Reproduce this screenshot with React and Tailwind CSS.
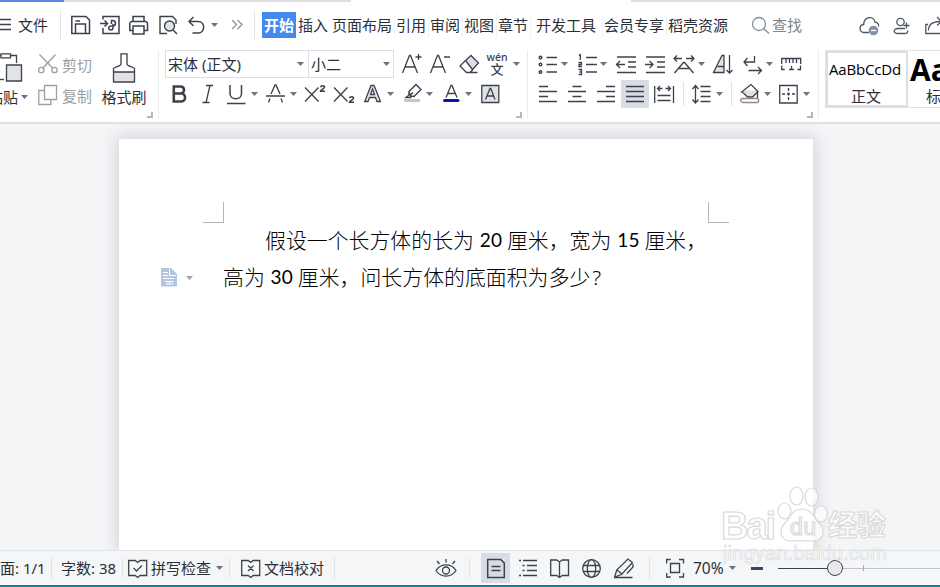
import React from 'react';

// Base 24px high drawing box, strokes only unless a shape sets its own fill
const Icon = ({ w = 24, className = 'text-[#3b424d]', sw = 1.3, children }) => (
    <svg
        width={w}
        height="24"
        viewBox={`0 0 ${w} 24`}
        fill="none"
        stroke="currentColor"
        strokeWidth={sw}
        className={`shrink-0 overflow-visible ${className}`}
    >
        {children}
    </svg>
);

// Fixed width cell of a toolbar row
const Slot = ({ className = '', children }) => (
    <div className={`flex shrink-0 items-center whitespace-nowrap ${className}`}>{children}</div>
);

const Caret = ({ className = 'text-[#6b7280]' }) => (
    <svg width="7" height="4" viewBox="0 0 7 4" fill="currentColor" className={`shrink-0 ${className}`}>
        <path d="M0 0h7L3.5 4z" />
    </svg>
);

const Divider = ({ className = 'h-7' }) => <div className={`w-px shrink-0 bg-[#dfe2e6] ${className}`} />;

const Corner = ({ className = '' }) => (
    <div className={`h-1.5 w-1.5 shrink-0 border-r-2 border-b-2 border-[#b4b8be] ${className}`} />
);

const MenuBar = () => (
    <div className="flex h-[46px] w-[960px] items-center text-[15px] leading-6 text-[#2b3038]">
        <Slot className="w-[18px]">
            <Icon w={12}><path d="M0 6.5h11M0 11.5h11M0 16.5h11" /></Icon>
        </Slot>
        <Slot className="w-[42px]">文件</Slot>
        <Slot className="w-[11px]"><Divider /></Slot>
        <Slot className="w-[29px]">
            <Icon w={20} sw={1.5}>
                <path d="M.8 3.500h14.200l3.500 3.500v13.500H.8z" />
                <path d="M4.500 20.500v-9.500h10v9.500M4.500 8h4.500" />
            </Icon>
        </Slot>
        <Slot className="w-[29px]">
            <Icon w={20} sw={1.5}>
                <path d="M3 6.500V3.500h16v17H3V15M0 10.500h7.500M4.500 7.500l3 3-3 3" />
                <path d="M11.500 11V7.500h1c4 0 4 5.500 0 5.500h-1.500c-3 0-3 4 0 4 1.500 0 2-1 2-2.500V11" />
            </Icon>
        </Slot>
        <Slot className="w-[30px]">
            <Icon w={20} sw={1.5}>
                <path d="M4 8.500V3.500h11v5M4 17.500H.8v-7.500L2.500 8.500h14.500L18.500 10v7.500H15" />
                <path d="M4 13h11v8H4z" />
            </Icon>
        </Slot>
        <Slot className="w-[29px]">
            <Icon w={19} sw={1.4}>
                <path d="M8 20.500H1v-17h12.500l3.500 3.500v4" />
                <circle cx="10.500" cy="13" r="5" fill="#e1e3e7" />
                <path d="M14 17l4 4" />
            </Icon>
        </Slot>
        <Slot className="w-[23px]">
            <Icon w={18} sw={1.500}><path d="M5.500 4L1 8.500 5.500 13M1 8.500H10c7.500 0 7.500 11.500 0 11.500H4.500" /></Icon>
        </Slot>
        <Slot className="w-[21px]"><Caret /></Slot>
        <Slot className="w-[22px]">
            <Icon w={12} className="text-[#8d929b]"><path d="M0 7l4.500 4.500L0 16M5.500 7l4.500 4.500L5.500 16" /></Icon>
        </Slot>
        <Slot className="w-2"><Divider /></Slot>
        <Slot className="h-[26px] w-[34px] justify-center bg-[#4389ee] font-bold text-white">开始</Slot>
        <Slot className="ml-0.5 w-[34px]">插入</Slot>
        <Slot className="w-[62px]">页面布局</Slot>
        <Slot className="w-[34px] border-l border-[#eef4f8] pl-px">引用</Slot>
        <Slot className="w-[34px] border-l border-[#eef4f8] pl-px">审阅</Slot>
        <Slot className="w-[34px] border-l border-[#eef4f8] pl-px">视图</Slot>
        <Slot className="w-[34px] border-l border-[#eef4f8] pl-px">章节</Slot>
        <Slot className="w-[72px] border-l border-[#eef4f8] pl-[5px]">开发工具</Slot>
        <Slot className="w-16 border-l border-[#eef4f8] pl-px">会员专享</Slot>
        <Slot className="w-[86px] border-l border-[#eef4f8] pl-px">稻壳资源</Slot>
        <Slot className="w-5">
            <Icon w={18} className="text-[#858e9b]">
                <circle cx="7" cy="11" r="6.500" />
                <path d="M11.500 15.500l5.500 5" />
            </Icon>
        </Slot>
        <Slot className="w-[87px] text-[#7d8590]">查找</Slot>
        <Slot className="w-[34px]">
            <Icon w={21} className="text-[#4d5663]">
                <path d="M10 19.500H5.500c-5.500 0-6-7.500-.8-8C5 3 15 2.500 16 9c3 .5 4 2.500 3.500 4.500" />
                <circle cx="14.500" cy="17.500" r="4.800" fill="#8091a8" stroke="none" />
                <path d="M12 17.500h5" stroke="#fff" />
            </Icon>
        </Slot>
        <Slot className="w-8">
            <Icon w={18} className="text-[#4d5663]">
                <circle cx="7.500" cy="9" r="3.700" />
                <path d="M12 15.500H5c-5 0-5 5 0 5h6.500c3 0 3.500-1.500 3-3M10.500 12.500h6M13.500 9.500v6" />
            </Icon>
        </Slot>
        <Icon w={18} className="text-[#4d5663]">
            <path d="M3 11.500H.8v9H18M3.500 17.500c0-6 4-9 12-9M12 4l4.500 4.500-4.500 4" />
        </Icon>
    </div>
);

const ClipboardGroup = () => (
    <div className="flex h-[68px] w-[159px] shrink-0 border-r border-[#e9ebee] text-[15px] leading-6 text-[#2b3038]">
        <div className="flex w-[37px] shrink-0 flex-col pt-[3px]">
            <svg width="24" height="30" viewBox="0 0 24 30" fill="none" stroke="#3b424d" strokeWidth="1.300" className="shrink-0">
                <path d="M0 2.500h1M10.500 2.500h6V10" />
                <path d="M1 .8h9.500v4H1z" />
                <path d="M6.500 12h15v16H6.500z" fill="#e1e3e7" />
                <path d="M0 26.500h4" />
            </svg>
            <div className="-ml-3 flex items-center whitespace-nowrap pt-0.5">
                粘贴
                <Caret className="ml-[3px] text-[#6b7280]" />
            </div>
        </div>
        <div className="flex w-16 shrink-0 flex-col gap-[7px] pt-[3px] pl-px text-[#9c9fa4]">
            <div className="flex whitespace-nowrap">
                <Icon w={24} className="text-[#9c9fa4]">
                    <path d="M1.500 1.500l13.500 14M17.500 1.500L4.500 15.500" />
                    <circle cx="3.300" cy="17" r="2.700" />
                    <circle cx="16.500" cy="17" r="2.700" />
                </Icon>
                剪切
            </div>
            <div className="flex whitespace-nowrap">
                <Icon w={24} className="text-[#9c9fa4]">
                    <path d="M6.500 1.500h12v14h-12z" />
                    <path d="M6 6.500H.8v14h12v-4.500" />
                </Icon>
                复制
            </div>
        </div>
        <div className="flex w-[46px] shrink-0 flex-col items-center whitespace-nowrap pt-[3px]">
            <svg width="24" height="30" viewBox="0 0 24 30" fill="none" stroke="#3b424d" strokeWidth="1.300" className="shrink-0">
                <path d="M1.500 19h21v10h-21z" fill="#e1e3e7" />
                <path d="M1.500 19v-3.500c0-1.500 7.500-2 7.500-4.500V.8h6V11c0 2.500 7.500 3 7.500 4.500V19" />
            </svg>
            <span className="pt-0.5">格式刷</span>
        </div>
        <Corner className="mt-[62px]" />
    </div>
);

const FontGroup = () => (
    <div className="flex h-[68px] w-[369px] shrink-0 border-r border-[#e9ebee] pl-1.5">
        <div className="flex w-[351px] shrink-0 flex-col">
            <div className="flex h-7 items-center text-[15px] leading-6 text-[#2b3038]">
                <div className="flex h-7 w-[144px] shrink-0 items-center justify-between border border-[#dcdfe3] pr-1 pl-0.5">
                    宋体 (正文)
                    <Caret />
                </div>
                <div className="flex h-7 w-[85px] shrink-0 items-center justify-between border border-l-0 border-[#dcdfe3] pr-[3px] pl-0.5">
                    小二
                    <Caret />
                </div>
                <Slot className="ml-2 w-[28px]">
                    <Icon w={20}><path d="M.5 21L7.500 3.500h1L15.500 21M3 15h10M13.500 5h6M16.500 2v6" /></Icon>
                </Slot>
                <Slot className="w-[29px]">
                    <Icon w={20}><path d="M.5 21L7.500 3.500h1L15.500 21M3 15h10M14 5h6" /></Icon>
                </Slot>
                <Slot className="w-[28px]">
                    <Icon w={21}>
                        <path d="M6.500 8.500L12 3.500l7.500 7.500-6 6.500z" fill="#dddfe3" />
                        <path d="M6.500 8.500L1 14l6.500 6.500h3.500l3-3M8 20.500h10.500" />
                    </Icon>
                </Slot>
                <Slot className="w-[26px]">
                    <div className="flex h-6 w-5 flex-col items-center text-[#3b424d]">
                        <span className="h-[11px] font-['Noto_Sans'] text-[10.5px] leading-[11px] font-medium">wén</span>
                        <span className="h-[12px] text-[13px] leading-[12px] font-medium">文</span>
                    </div>
                </Slot>
                <Caret />
            </div>
            <div className="mt-0.5 flex h-7 items-center">
                <Slot className="ml-[7px] w-[31px]">
                    <Icon w={16} sw={2.6}><path d="M1.800 4.500h6.500c5 0 5 7 0 7H1.800h7.500c5 0 5 8 0 8H1.800z" /></Icon>
                </Slot>
                <Slot className="w-6">
                    <Icon w={11}><path d="M3 3.500h7M-.5 20.500h7M7 3.500l-4 17" /></Icon>
                </Slot>
                <Slot className="w-6">
                    <Icon w={18} sw={1.500}><path d="M3 3v8.500c0 7 11.500 7 11.500 0V3M0 21.500h18.500" /></Icon>
                </Slot>
                <Slot className="w-[15px]"><Caret /></Slot>
                <Slot className="w-6">
                    <Icon w={19}><path d="M0 14h19M5 12L9 3h1l4 9M4 16.500L2.500 20.500M15 16.500l1.500 4" /></Icon>
                </Slot>
                <Slot className="w-[15px]"><Caret /></Slot>
                <Slot className="w-[29px]">
                    <Icon w={21}>
                        <path d="M0 5.500l13.500 14M13.500 5.500l-13.500 14" />
                        <path d="M15.500 5.200c.5-2 4-2 4 0 0 1.500-4 2.800-4 4h4.500" strokeWidth="1.600" />
                    </Icon>
                </Slot>
                <Slot className="w-[30px]">
                    <Icon w={21}>
                        <path d="M0 5.500l13.500 14M13.500 5.500l-13.500 14" />
                        <path d="M15.500 16.200c.5-2 4-2 4 0 0 1.500-4 2.800-4 4h4.500" strokeWidth="1.600" />
                    </Icon>
                </Slot>
                <Slot className="w-[23px]">
                    <Icon w={18}>
                        <path d="M.8 19.500L7 3.500h3l6.500 16h-3.500l-1.500-4h-6l-1.500 4zM6.500 12.500h4L8.500 7z" fill="#e8eaed" fillRule="evenodd" />
                    </Icon>
                </Slot>
                <Slot className="w-[17px]"><Caret /></Slot>
                <Slot className="w-[22px]">
                    <Icon w={18} sw={1.4}>
                        <path d="M0 18.500h16" stroke="#c4c6c9" strokeWidth="3" />
                        <path d="M5 9.500L12 2.500l5 5-7 7-3.500-.5zM5 9.500v3.500l-3 2.500h4.500l1-1.500M9 10.500l-3 3" />
                    </Icon>
                </Slot>
                <Slot className="w-[17px]"><Caret /></Slot>
                <Slot className="w-[22px]">
                    <Icon w={17}>
                        <path d="M3 15.500L8 3.500h1l5 12M4.500 11.500h8" />
                        <path d="M1.500 18.500h13.500" stroke="#0b14a8" strokeWidth="3" strokeLinecap="round" />
                    </Icon>
                </Slot>
                <Slot className="w-4"><Caret /></Slot>
                <Icon w={19}>
                    <path d="M.8 3.500h17v17H.8z" fill="#e1e3e7" />
                    <path d="M4.500 17.500L9 6.500h.8L14 17.500M6 14h7" />
                </Icon>
            </div>
        </div>
        <Corner className="mt-[62px]" />
    </div>
);

const ParagraphGroup = () => (
    <div className="flex h-[68px] w-[291px] shrink-0 border-r border-[#e9ebee] pl-[10px]">
        <div className="flex w-[269px] shrink-0 flex-col">
            <div className="flex h-7 items-center">
                <Slot className="w-[23px]">
                    <Icon w={20} sw={1.4}>
                        <path d="M8.500 5.500H19M8.500 12.500H19M8.500 20H19" />
                        <circle cx="2.500" cy="5.500" r="1.300" />
                        <circle cx="2.500" cy="12.500" r="1.300" />
                        <circle cx="2.500" cy="20" r="1.300" />
                    </Icon>
                </Slot>
                <Slot className="w-[17px]"><Caret /></Slot>
                <Slot className="w-[22px]">
                    <Icon w={20}>
                        <path d="M8 5.500h11M8 12.500h11M8 20h11" />
                        <path d="M.8 3.500l1.500-.8v5.300M.5 10.500h3v2H1v2h3M.5 17.500h3v5h-3M1.500 20h2" />
                    </Icon>
                </Slot>
                <Slot className="w-[16px]"><Caret /></Slot>
                <Slot className="w-[29px]">
                    <Icon w={20}><path d="M1 5h19M12 10h8M12 15h8M1 20.500h19M0 12.500h9M4 9l-3.500 3.500L4 16" /></Icon>
                </Slot>
                <Slot className="w-[29px]">
                    <Icon w={20}><path d="M1 5h19M12 10h8M12 15h8M1 20.500h19M0 12.500h8M4.500 9L8 12.500 4.500 16" /></Icon>
                </Slot>
                <Slot className="w-[24px]">
                    <Icon w={20}>
                        <path d="M.5 21L9.500 10.500h1L19.500 21M5 16.500h10" />
                        <path d="M0 6.500h8M12 6.500h8M3 3.500l-3 3 3 3M17 3.500l3 3-3 3" />
                    </Icon>
                </Slot>
                <Slot className="w-[15px]"><Caret /></Slot>
                <Slot className="w-[31px]">
                    <Icon w={20}>
                        <path d="M.5 20.500L9 3.500h2v17z" fill="#e1e3e7" />
                        <path d="M4.500 14.500h6.500M16.500 3v18M13.500 18l3 3 3-3" />
                    </Icon>
                </Slot>
                <Slot className="w-[22px]">
                    <Icon w={18}><path d="M10.500 4v6H0M3.500 6L0 10l3.500 4M4.500 18.500h13M14 15l3.500 3.500L14 22" /></Icon>
                </Slot>
                <Slot className="w-[15px]"><Caret /></Slot>
                <Icon w={20}>
                    <path d="M.7 12V6.500h19V12M5 7v4M8.500 7v4M12 7v4M15.500 7v4M.7 13.500v4h3M19.500 13.500v4h-3M8 17.500h5M10.500 14v3.500" />
                </Icon>
            </div>
            <div className="mt-0.5 flex h-7 items-center">
                <Slot className="ml-px w-[29px]">
                    <Icon w={18}><path d="M0 4.500h9M0 9.500h18M0 14.500h9M0 19.500h18" /></Icon>
                </Slot>
                <Slot className="w-[29px]">
                    <Icon w={18}><path d="M4.500 4.500h9M0 9.500h18M4.500 14.500h9M0 19.500h18" /></Icon>
                </Slot>
                <Slot className="w-6">
                    <Icon w={18}><path d="M9 4.500h9M0 9.500h18M9 14.500h9M0 19.500h18" /></Icon>
                </Slot>
                <div className="flex h-7 w-7 shrink-0 items-center justify-center bg-[#d8dde4]">
                    <Icon w={18} sw={1.500}><path d="M0 4.500h18M0 9.500h18M0 14.500h18M0 19.500h18" /></Icon>
                </div>
                <Slot className="ml-[5px] w-[29px]">
                    <Icon w={20}><path d="M.7 4v17M19.500 4v17M3.500 13.500h13M3.500 18.500h13M3.500 6.500h5M11.500 6.500h5M6 4L3.500 6.500 6 9M14 4l2.500 2.500L14 9" /></Icon>
                </Slot>
                <Slot className="w-[9px]"><Divider className="h-6" /></Slot>
                <Slot className="w-6">
                    <Icon w={20}><path d="M8.500 4.500H18.500M8.500 9.500H18.500M8.500 14.500H18.500M8.500 19.500H18.500M3.500 4v17M.5 7l3-3.500 3 3.500M.5 17.500l3 3.500 3-3.500" /></Icon>
                </Slot>
                <Slot className="w-[15px]"><Caret /></Slot>
                <Slot className="w-[9px]"><Divider className="h-6" /></Slot>
                <Slot className="w-6">
                    <Icon w={20}>
                        <path d="M3 8.500h14.500l-5 6.500H7z" fill="#dfe1e5" stroke="none" />
                        <path d="M1.500 10l2-1.500 7.500-6 7 7-5.500 5.500H7.500L3.500 11z" />
                        <path d="M17.500 9v7" />
                        <rect x=".7" y="16.500" width="18" height="4" rx="2" stroke="#9b8686" fill="#fff" />
                    </Icon>
                </Slot>
                <Slot className="w-[15px]"><Caret /></Slot>
                <Slot className="w-6">
                    <Icon w={19}>
                        <path d="M.7 3.500h17.500v17.500H.7z" sw="1.5" />
                        <path d="M9.500 6v3M9.500 10.500v3M9.500 15v3M3 12h3M8 12h3M13 12h3" />
                    </Icon>
                </Slot>
                <Caret />
            </div>
        </div>
        <Corner className="mt-[62px]" />
    </div>
);

const StyleGallery = () => (
    <div className="ml-1.5 flex h-[58px] w-[140px] shrink-0 border border-r-0 border-[#dfe2e6] text-[15px] text-[#2b3038]">
        <div className="flex w-[82px] shrink-0 flex-col items-center border-2 border-[#dcdee1] whitespace-nowrap">
            <span className="-ml-1 h-[32px] font-['Open_Sans'] text-[15px] leading-[32px] tracking-[-0.15px] text-black">AaBbCcDd</span>
            <span className="-ml-0.5 leading-[22px]">正文</span>
        </div>
        <div className="flex shrink-0 flex-col whitespace-nowrap pt-0.5 pl-0.5">
            <span className="h-[32px] font-['Open_Sans'] text-[30px] leading-[34px] font-bold text-black">AaBb</span>
            <span className="pl-4 leading-[22px]">标题 1</span>
        </div>
    </div>
);

const Page = () => (
    <div className="ml-[119px] flex h-[411px] w-[694px] flex-col bg-white shadow-[0_0_14px_3px_rgba(60,70,85,0.18)]">
        {/* margin crop marks */}
        <div className="mt-[63px] flex h-[21px] justify-between pr-[84px] pl-[84px]">
            <div className="w-[21px] border-r border-b border-[#b5b5b5]" />
            <div className="w-[21px] border-b border-l border-[#b5b5b5]" />
        </div>
        <div className="-mt-px flex h-[37px] items-center pl-[146px] text-[20.9px] font-light whitespace-pre text-black">
            假设一个长方体的长为
            <span className="w-[33px] pl-px text-center font-['Lato'] text-[19px] font-normal tracking-[0.2px]">20</span>
            厘米，宽为
            <span className="w-[33px] pl-px text-center font-['Lato'] text-[19px] font-normal tracking-[0.2px]">15</span>
            厘米，
        </div>
        <div className="flex h-[37px] items-center whitespace-pre text-[20.9px] font-light text-black">
            <Slot className="ml-[42px] w-[25px]">
                <svg width="17" height="19" viewBox="0 0 17 19" fill="#b3c6de">
                    <path d="M0 0h10l6 6v12.500H0z" />
                    <path d="M2 4.500h5M2 7.500h5M2 10.500h11M4 13.500h9M8.500 1v6.500H15M5 16h7M8.500 13v3" stroke="#fff" fill="none" />
                </svg>
            </Slot>
            <Slot className="w-[37px]"><Caret className="text-[#a3a7ad]" /></Slot>
            高为
            <span className="w-[33px] pl-px text-center font-['Lato'] text-[19px] font-normal tracking-[0.2px]">30</span>
            厘米，问长方体的底面积为多少<span className="pl-0.5">?</span>
        </div>
    </div>
);

const StatusBar = () => (
    <div className="flex h-[37px] w-[960px] items-center border-t border-b-2 border-t-[#dfe2e6] border-b-[#147f9f] bg-[#f4f6f7] text-[15px] leading-6 text-[#2b3038]">
        <Slot className="-ml-[15px] w-[66px]">页面: 1/1</Slot>
        <Slot className="w-[10px]"><Divider className="h-5" /></Slot>
        <Slot className="w-[61px]">字数: 38</Slot>
        <Slot className="w-1.5"><Divider className="h-5" /></Slot>
        <Slot className="w-[23px]">
            <Icon w={20}><path d="M.7 4.500h6.500l2.500 2 2.500-2h6.500v15h-6.500l-2.500 2-2.500-2H.7zM5.500 12l3 3 5.500-5.500" /></Icon>
        </Slot>
        <Slot className="w-[65px]">拼写检查</Slot>
        <Slot className="w-[13px]"><Caret /></Slot>
        <Slot className="w-3"><Divider className="h-5" /></Slot>
        <Slot className="w-[23px]">
            <Icon w={20}><path d="M.7 4.500h6.500l2.500 2 2.500-2h6.500v15h-6.500l-2.500 2-2.500-2H.7zM7 9.500l5.500 5.500M12.500 9.500L7 15" /></Icon>
        </Slot>
        <Slot className="w-[70px]">文档校对</Slot>
        <Slot className="w-[102px]"><Divider className="h-5" /></Slot>
        <Slot className="w-[33px]">
            <Icon w={20}>
                <path d="M0 14.500c5-7.500 15-7.500 20 0-5 7.500-15 7.500-20 0z" />
                <circle cx="10" cy="14.500" r="3.500" />
                <path d="M10 3v3.500M1 5l2.500 3M19 5l-2.500 3" />
            </Icon>
        </Slot>
        <Slot className="w-3"><Divider className="h-5" /></Slot>
        <div className="flex h-[30px] w-[29px] shrink-0 items-center justify-center bg-[#d8dde4]">
            <Icon w={18} sw={1.5}><path d="M.7 3.500h13l3.600 3.600v14.400H.7zM4.500 10.500h9M4.500 14.500h9" /></Icon>
        </div>
        <Slot className="ml-[9px] w-[31px]">
            <Icon w={19}><path d="M0 4.500h2M4 4.500h14M3.500 9.500h2M8 9.500h10M3.500 14.500h2M8 14.500h10M0 19.500h2M4 19.500h14" /></Icon>
        </Slot>
        <Slot className="w-8">
            <Icon w={20}><path d="M.7 4h6l2.800 2 2.800-2h6.200v15.500h-6.200l-2.800 2-2.800-2h-6zM9.500 6v15" /></Icon>
        </Slot>
        <Slot className="w-8">
            <Icon w={20}>
                <circle cx="9.500" cy="12.500" r="8.800" />
                <ellipse cx="9.500" cy="12.500" rx="4.200" ry="8.800" />
                <path d="M1.500 9.500h16M1.500 15.500h16" />
            </Icon>
        </Slot>
        <Slot className="w-[35px]">
            <Icon w={20}><path d="M.7 21l2-7L14 3l4.500 3.500L7.500 18.500zM3 14l5 4M0 21.500h18.500M19 8v3l-6 6.500" /></Icon>
        </Slot>
        <Slot className="w-[17px]"><Divider className="h-5" /></Slot>
        <Slot className="w-[27px]">
            <Icon w={18}><path d="M.7 7.500V3.500h4M13 3.500h4.500v4M17.500 17v4H13M4.700 21h-4v-4M4.500 7.500h9v9h-9z" /></Icon>
        </Slot>
        <Slot className="w-9 text-[15.5px]">70%</Slot>
        <Slot className="w-[22px]"><Caret /></Slot>
        <div className="h-[3px] w-3 shrink-0 bg-[#3b4660]" />
        {/* zoom slider */}
        <div className="ml-[15px] flex shrink-0 items-center">
            <div className="h-px w-[49px] bg-[#3b424d]" />
            <div className="h-4 w-4 rounded-full border-[1.500px] border-[#3b424d] bg-[#e9e9ea]" />
            <div className="h-px w-5 bg-[#c0c4c9]" />
            <div className="h-1.5 w-px bg-[#a8acb2]" />
            <div className="h-px w-[90px] bg-[#c0c4c9]" />
        </div>
    </div>
);

const Watermark = () => (
    <svg
        width="180"
        height="90"
        viewBox="0 0 180 90"
        className="pointer-events-none absolute top-[482px] left-[716px]"
        fill="#fff"
        fillOpacity="0.75"
        stroke="#d9dadc"
        strokeWidth="1.200"
    >
        <text x="5" y="57" fontFamily="Liberation Sans" fontSize="38" fontWeight="700" textLength="55">Bai</text>
        <ellipse cx="68.500" cy="29" rx="6.500" ry="8" />
        <ellipse cx="80.500" cy="14" rx="6.500" ry="9" />
        <ellipse cx="95.500" cy="15" rx="6.500" ry="9" />
        <ellipse cx="105" cy="32" rx="6.500" ry="8" />
        <path d="M86 27c10 0 11 8 17 14s6 17-5 18c-8 0-16-1-24 0-11-1-11-12-5-18s7-14 17-14z" />
        <text x="74" y="53" fontFamily="Liberation Sans" fontSize="23" fontWeight="400" textLength="26">du</text>
        <text x="112" y="54" fontFamily="Noto Sans CJK SC" fontSize="29" fontWeight="700">经验</text>
        <text x="7" y="78" fontFamily="Liberation Sans" fontSize="20" textLength="164" strokeWidth="0.700">jingyan.baidu.com</text>
    </svg>
);

const App = () => (
    <div className="relative flex h-[587px] w-[940px] flex-col overflow-hidden bg-white font-['Noto_Sans','Noto_Sans_CJK_SC',sans-serif]">
        <div className="flex h-0.5 shrink-0">
            <div className="w-16 bg-[#5f87e0]" />
            <div className="w-[287px] bg-[#dedfe1]" />
            <div className="w-[280px] bg-white" />
            <div className="flex-1 bg-[#dedfe1]" />
        </div>
        <MenuBar />
        <div className="mt-0.5 flex h-[72px] w-[970px] shrink-0">
            <ClipboardGroup />
            <FontGroup />
            <ParagraphGroup />
            <StyleGallery />
        </div>
        <div className="h-[428px] shrink-0 overflow-hidden border-t-2 border-[#dfe1e4] bg-[#f4f5f7] pt-[15px]">
            <Page />
        </div>
        <StatusBar />
        <Watermark />
    </div>
);

export default App;
